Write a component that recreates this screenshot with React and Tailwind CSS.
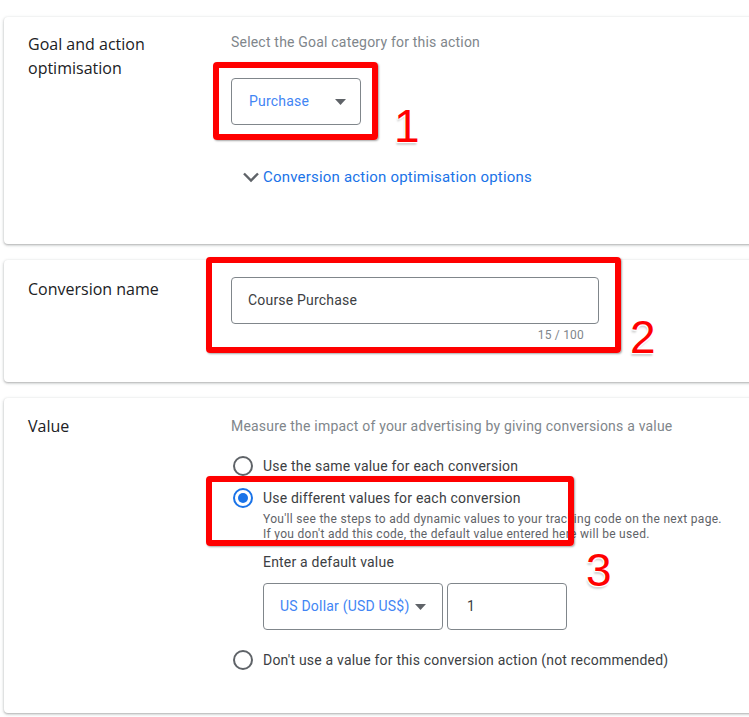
import React from "react";

const card =
  "relative ml-1 w-[800px] rounded bg-white flex shadow-[0_1px_2px_rgba(60,64,67,0.3),0_1px_3px_1px_rgba(60,64,67,0.12)]";
const label = "w-[227px] shrink-0 pl-6 text-[16px] leading-6 font-medium tracking-normal text-[#202124] [font-family:'Open_Sans',sans-serif]";
const roboto = "[font-family:Roboto,'Liberation_Sans',sans-serif]";

const Arrow = () => (
  <svg width="11" height="6" viewBox="0 0 11 6" className="shrink-0">
    <path d="M0 0h11L5.5 6z" fill="#5f6368" />
  </svg>
);

const Radio = ({ checked }) =>
  checked ? (
    <span className="flex h-5 w-5 shrink-0 items-center justify-center rounded-full border-2 border-[#1a73e8]">
      <span className="h-[10px] w-[10px] rounded-full bg-[#1a73e8]" />
    </span>
  ) : (
    <span className="h-5 w-5 shrink-0 rounded-full border-2 border-[#5f6368]" />
  );

const Marker = ({ className }) => (
  <div
    className={`pointer-events-none absolute rounded-[4px] border-[6px] border-[#ff0000] shadow-[1px_1px_2px_rgba(0,0,0,0.35)] ${className}`}
  />
);

const Num = ({ n, className }) => (
  <span
    className={`pointer-events-none absolute text-[46px] leading-none tracking-normal text-[#ff0000] [font-family:'Liberation_Sans',Arial,sans-serif] [text-shadow:-1px_-1px_0_#fff,1px_-1px_0_#fff,-1px_1px_0_#fff,1px_1px_0_#fff,-1px_3px_2px_rgba(0,0,0,0.18)] ${className}`}
  >
    {n}
  </span>
);

export default function App() {
  return (
    <div className={`min-h-[717px] w-full overflow-hidden bg-white tracking-[0.2px] ${roboto}`}>
      {/* Goal and action optimisation */}
      <section className={`${card} mt-[17px] pt-[15px] pb-[57px]`}>
        <div className={label}>
          Goal and action
          <br />
          optimisation
        </div>
        <div className="flex flex-col items-start">
          <p className="text-[14px] leading-5 text-[#80868b]">Select the Goal category for this action</p>
          <div className="mt-[26px] flex h-[47px] w-[130px] items-center justify-between rounded border border-[#80868b] pl-[17px] pr-[14px]">
            <span className="text-[14px] text-[#4285f4]">Purchase</span>
            <Arrow />
          </div>
          <button className="mt-[42px] ml-[11px] flex items-center gap-[3px] text-[15px] leading-5 text-[#1a73e8]">
            <svg width="18" height="12" viewBox="0 0 18 12">
              <polyline points="2,2.5 9,9.5 16,2.5" fill="none" stroke="#5f6368" strokeWidth="2.4" />
            </svg>
            Conversion action optimisation options
          </button>
        </div>
        <Marker className="left-[209px] top-[45px] h-[78px] w-[165px]" />
        <Num n="1" className="left-[390px] top-[86px]" />
      </section>

      {/* Conversion name */}
      <section className={`${card} mt-4 pt-[17px] pb-[39px]`}>
        <div className={label}>Conversion name</div>
        <div className="flex w-[368px] flex-col">
          <div className="flex h-[47px] items-center rounded border border-[#80868b] pl-[16px] text-[14px] text-[#3c4043]">
            Course Purchase
          </div>
          <span className="mt-[3px] self-end pr-[15px] text-[12px] leading-4 text-[#80868b]">15 / 100</span>
        </div>
        <Marker className="left-[202px] top-[-3px] h-[96px] w-[415px]" />
        <Num n="2" className="left-[626px] top-[54px]" />
      </section>

      {/* Value */}
      <section className={`${card} mt-4 pt-4 pb-[41px]`}>
        <div className={label}>Value</div>
        <div className="flex flex-col pt-[2px]">
          <p className="text-[14px] leading-5 text-[#80868b]">
            Measure the impact of your advertising by giving conversions a value
          </p>
          <label className="mt-[18px] flex h-6 items-center gap-[10px] pl-[2px] text-[14px] text-[#3c4043]">
            <Radio />
            Use the same value for each conversion
          </label>
          <label className="mt-2 flex h-6 items-center gap-[10px] pl-[2px] text-[14px] text-[#3c4043]">
            <Radio checked />
            Use different values for each conversion
          </label>
          <div className="pl-8">
            <p className="mt-[2px] whitespace-nowrap text-[12px] leading-[15px] tracking-[0.3px] text-[#5f6368]">
              You'll see the steps to add dynamic values to your tracking code on the next page.
              <br />
              If you don't add this code, the default value entered here will be used.
            </p>
            <p className="mt-[10px] text-[14px] leading-5 text-[#3c4043]">Enter a default value</p>
            <div className="mt-[11px] flex gap-1">
              <div className="flex h-[47px] w-[180px] items-center justify-between rounded border border-[#80868b] pl-[16px] pr-[16px]">
                <span className="text-[14px] text-[#4285f4]">US Dollar (USD US$)</span>
                <Arrow />
              </div>
              <div className="flex h-[47px] w-[120px] items-center rounded border border-[#80868b] pl-[19px] text-[14px] text-[#3c4043]">
                1
              </div>
            </div>
          </div>
          <label className="mt-[18px] flex h-6 items-center gap-[10px] pl-[2px] text-[14px] text-[#3c4043]">
            <Radio />
            Don't use a value for this conversion action (not recommended)
          </label>
        </div>
        <Marker className="left-[202px] top-[78px] h-[70px] w-[368px]" />
        <Num n="3" className="left-[582px] top-[149px]" />
      </section>
    </div>
  );
}
